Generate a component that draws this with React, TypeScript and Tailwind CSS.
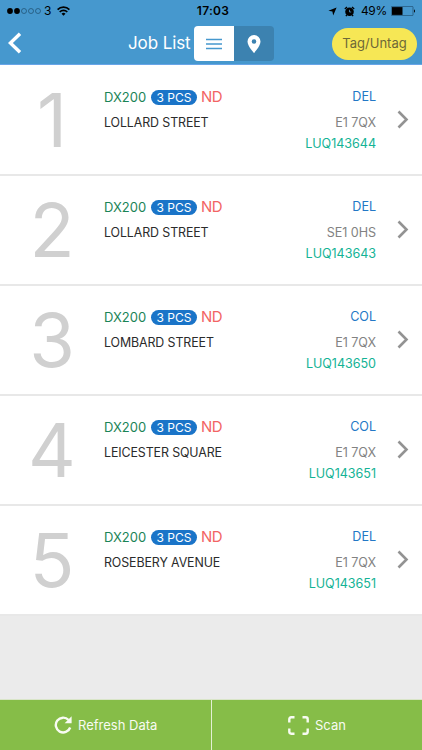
type Job = {
  street: string
  type: 'DEL' | 'COL'
  postcode: string
  reference: string
}

const jobs: Job[] = [
  { street: 'LOLLARD STREET', type: 'DEL', postcode: 'E1 7QX', reference: 'LUQ143644' },
  { street: 'LOLLARD STREET', type: 'DEL', postcode: 'SE1 0HS', reference: 'LUQ143643' },
  { street: 'LOMBARD STREET', type: 'COL', postcode: 'E1 7QX', reference: 'LUQ143650' },
  { street: 'LEICESTER SQUARE', type: 'COL', postcode: 'E1 7QX', reference: 'LUQ143651' },
  { street: 'ROSEBERY AVENUE', type: 'DEL', postcode: 'E1 7QX', reference: 'LUQ143651' },
]

function StatusBar() {
  return (
    <div className="relative flex h-[22px] items-center justify-between pr-[6px] pl-[7px] text-[12px] text-black">
      <div className="flex items-center">
        <svg width="35" height="8" viewBox="0 0 35 8">
          <circle cx="3" cy="4" r="2.9" />
          <circle cx="10" cy="4" r="2.9" />
          <g fill="none" stroke="#173f5c" strokeWidth="0.6">
            <circle cx="17" cy="4" r="2.5" />
            <circle cx="24" cy="4" r="2.5" />
            <circle cx="31" cy="4" r="2.5" />
          </g>
        </svg>
        <span className="ml-[2px]">3</span>
        <svg className="-mt-px ml-[6px]" width="13" height="10" viewBox="0 0 13 10" fill="none" stroke="black" strokeWidth="1.7">
          <path d="M0.6 3.6a8.4 8.4 0 0 1 11.8 0" />
          <path d="M2.7 6a5.4 5.4 0 0 1 7.6 0" />
          <path d="M6.5 9.8L4.5 7.7a2.8 2.8 0 0 1 4 0z" fill="black" stroke="none" />
        </svg>
      </div>
      <span className="absolute inset-x-0 pl-[4px] text-center text-[12px] font-semibold tracking-[0.3px]">17:03</span>
      <div className="flex items-center">
        <svg width="9" height="9" viewBox="0 0 9 9">
          <path d="M8.6 0.4L5.2 8.6L4.4 4.6L0.4 3.8z" />
        </svg>
        <svg className="ml-[7px]" width="11" height="11" viewBox="0 0 11 11">
          <circle cx="5.5" cy="5.8" r="4.3" />
          <path d="M0.8 3L3 1M10.2 3L8 1M2.8 9L1.9 10.2M8.2 9L9.1 10.2" stroke="black" strokeWidth="1.3" />
          <path d="M5.5 3.8V6H7.2" fill="none" stroke="#4698ce" strokeWidth="0.8" />
        </svg>
        <span className="ml-[6px] text-[12px] tracking-[-0.3px]">49%</span>
        <svg className="ml-[4px]" width="25" height="10" viewBox="0 0 25 10">
          <rect x="0.3" y="0.4" width="21.7" height="9.2" rx="0.8" fill="none" stroke="#173f5c" strokeWidth="0.6" />
          <rect x="1" y="1.1" width="10.5" height="7.8" />
          <path d="M23 3.3c1.3.4 1.3 3 0 3.4z" />
        </svg>
      </div>
    </div>
  )
}

function Header() {
  return (
    <header className="h-[66px] border-b border-white bg-[#4698ce]">
      <div className="h-[65px] border-b border-[#68a5e8]">
        <StatusBar />
        <div className="flex h-[42px] items-center">
          <svg className="ml-[8px] shrink-0" width="14" height="22" viewBox="0 0 14 22" fill="none" stroke="white" strokeWidth="3.4">
            <path d="M12 1.8L2.4 11L12 20.2" />
          </svg>
          <h1 className="mt-[2px] ml-[106px] w-[66px] text-[17px] tracking-[-0.1px] whitespace-nowrap text-white">Job List</h1>
          <div className="mt-[1px] flex h-[35px] w-[80px] overflow-hidden rounded-[4px]">
            <button className="flex w-[40px] items-center justify-center bg-white">
              <svg width="16" height="12" viewBox="0 0 16 12" stroke="#4698ce" strokeWidth="1.5">
                <path d="M0 1.5h16M0 6h16M0 10.5h16" />
              </svg>
            </button>
            <button className="flex w-[40px] items-center justify-center bg-[#3c82b0]">
              <svg width="14" height="18" viewBox="0 0 14 18" fill="white">
                <path fillRule="evenodd" d="M7 0a6.5 6.5 0 0 0-6.5 6.5C.5 11.2 7 18 7 18s6.5-6.8 6.5-11.5A6.5 6.5 0 0 0 7 0zm0 4.2a2.3 2.3 0 1 1 0 4.6 2.3 2.3 0 0 1 0-4.6z" />
              </svg>
            </button>
          </div>
          <button className="mt-[2px] ml-[58px] h-[32px] w-[85px] rounded-full bg-[#f6e755] text-[13px] text-[#6e6938]">
            Tag/Untag
          </button>
        </div>
      </div>
    </header>
  )
}

function JobRow({ job, position }: { job: Job; position: number }) {
  return (
    <li className="flex h-[110px] border-b-2 border-[#e8e8e8] bg-white">
      <div className="flex w-[104px] justify-center pt-[19px] text-[74px] leading-[70px] text-[#d0d0d0]">
        {position}
      </div>
      <div className="flex-1 pt-[23px] whitespace-nowrap">
        <div className="flex h-[18px] items-center text-[13px]">
          <span className="w-[47px] text-[#1b8457]">DX200</span>
          <span className="-mt-px h-[15px] w-[46px] rounded-full bg-[#1a74c8] text-center text-[12px] leading-[15px] text-white">
            3 PCS
          </span>
          <span className="-mt-[2px] ml-[4px] text-[15px] tracking-[-0.5px] text-[#f26464]">ND</span>
        </div>
        <div className="mt-[7px] text-[12.4px] leading-[18px] tracking-[-0.1px] text-[#2b2b2b]">{job.street}</div>
      </div>
      <div className="pt-[22px] text-right text-[12.6px] leading-[18px] tracking-[-0.05px]">
        <div className="text-[#2378c6]">{job.type}</div>
        <div className="mt-[8px] text-[#828282]">{job.postcode}</div>
        <div className="mt-[3px] text-[#14b395]">{job.reference}</div>
      </div>
      <div className="flex w-[46px] justify-start pt-[44px] pl-[21px]">
        <svg width="12" height="19" viewBox="0 0 12 19" fill="none" stroke="#939393" strokeWidth="2.6">
          <path d="M1.5 1.5L9.5 9.5L1.5 17.5" />
        </svg>
      </div>
    </li>
  )
}

function Footer() {
  return (
    <footer className="flex h-[51px] border-t border-[#d9e5c8] bg-[#86bd48] text-[13px] text-[#f8fbf2]">
      <button className="flex w-[212px] items-center border-r border-[#e4f0d4] pl-[54px]">
        <svg width="18" height="18" viewBox="0 0 18 18">
          <path d="M14.6 4A7.4 7.4 0 1 0 16.2 11.5" fill="none" stroke="currentColor" strokeWidth="2.4" />
          <path d="M17.6 0.3V7.3H10.6z" fill="currentColor" />
        </svg>
        <span className="mt-[2px] ml-[6px]">Refresh Data</span>
      </button>
      <button className="flex flex-1 items-center pl-[76px]">
        <svg width="21" height="19" viewBox="0 0 21 19" fill="none" stroke="currentColor" strokeWidth="2.4">
          <path d="M1.3 6.5V3.2Q1.3 1.3 3.2 1.3H6.5M14.5 1.3H17.8Q19.7 1.3 19.7 3.2V6.5M19.7 12.5V15.8Q19.7 17.7 17.8 17.7H14.5M6.5 17.7H3.2Q1.3 17.7 1.3 15.8V12.5" />
        </svg>
        <span className="mt-[2px] ml-[6px]">Scan</span>
      </button>
    </footer>
  )
}

function App() {
  return (
    <div className="flex h-[750px] w-[422px] flex-col overflow-hidden bg-[#ebebeb] font-['Inter',sans-serif]">
      <Header />
      <ul className="flex-1">
        {jobs.map((job, index) => (
          <JobRow key={index} job={job} position={index + 1} />
        ))}
      </ul>
      <Footer />
    </div>
  )
}

export default App
